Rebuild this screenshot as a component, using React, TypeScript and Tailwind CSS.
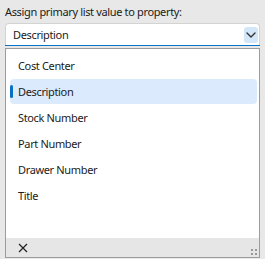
const items = ['Cost Center', 'Description', 'Stock Number', 'Part Number', 'Drawer Number', 'Title']

export default function App() {
  const selected = 'Description'
  return (
    <div
      className="w-[265px] h-[259px] bg-[#e8e8e8] text-[#1b1b1b] text-[11px] tracking-[-0.35px] leading-none flex flex-col"
      style={{ fontFamily: '"Noto Sans", "Open Sans", sans-serif' }}
    >
      <div className="pl-[5px] pt-[6px] h-[23px]">Assign primary list value to property:</div>

      {/* combobox */}
      <div className="mx-[5px] h-[22px] bg-white border border-[#d3d3d3] border-b-0 rounded-t-[4px] flex items-center relative">
        <span className="pl-[7px] flex-1">{selected}</span>
        <div className="w-[14px] h-[16px] mr-[1px] bg-[#d4e7f8] rounded-[3px] flex items-center justify-center">
          <svg width="10" height="6" viewBox="0 0 10 6" fill="none">
            <path d="M1 1l4 4 4-4" stroke="#333" strokeWidth="1.4" strokeLinecap="round" strokeLinejoin="round" />
          </svg>
        </div>
        <div className="absolute left-[-1px] right-[-1px] bottom-[-1px] h-[1.5px] bg-[#0a73c6]" />
      </div>

      {/* dropdown */}
      <div className="mx-[5px] mt-[3px] h-[210px] bg-white border border-[#9c9c9c] flex flex-col">
        <div className="flex-1 pt-[3px]">
          {items.map((item) => (
            <div key={item} className="h-[26px] flex items-center">
              <div
                className={
                  item === selected
                    ? 'relative ml-[4px] mr-[2px] h-[25px] flex-1 flex items-center pl-[8px] bg-[#dbeafc] rounded-[4px]'
                    : 'ml-[4px] mr-[2px] h-[25px] flex-1 flex items-center pl-[8px]'
                }
              >
                {item === selected && (
                  <span className="absolute left-0 top-[6px] w-[3px] h-[13px] rounded-full bg-[#0a6fc2]" />
                )}
                {item}
              </div>
            </div>
          ))}
        </div>
        <div className="h-[19px] bg-[#e6e6e6] flex items-center justify-between">
          <svg className="ml-[12px]" width="10" height="10" viewBox="0 0 10 10">
            <path d="M1 1l8 8M9 1l-8 8" stroke="#222" strokeWidth="1.2" />
          </svg>
          <svg className="mr-[1px] mt-[8px]" width="8" height="8" viewBox="0 0 8 8" fill="#9a9a9a">
            <rect x="1" y="1" width="2" height="2" />
            <rect x="5" y="1" width="2" height="2" />
            <rect x="1" y="5" width="2" height="2" />
            <rect x="5" y="5" width="2" height="2" />
          </svg>
        </div>
      </div>
    </div>
  )
}
